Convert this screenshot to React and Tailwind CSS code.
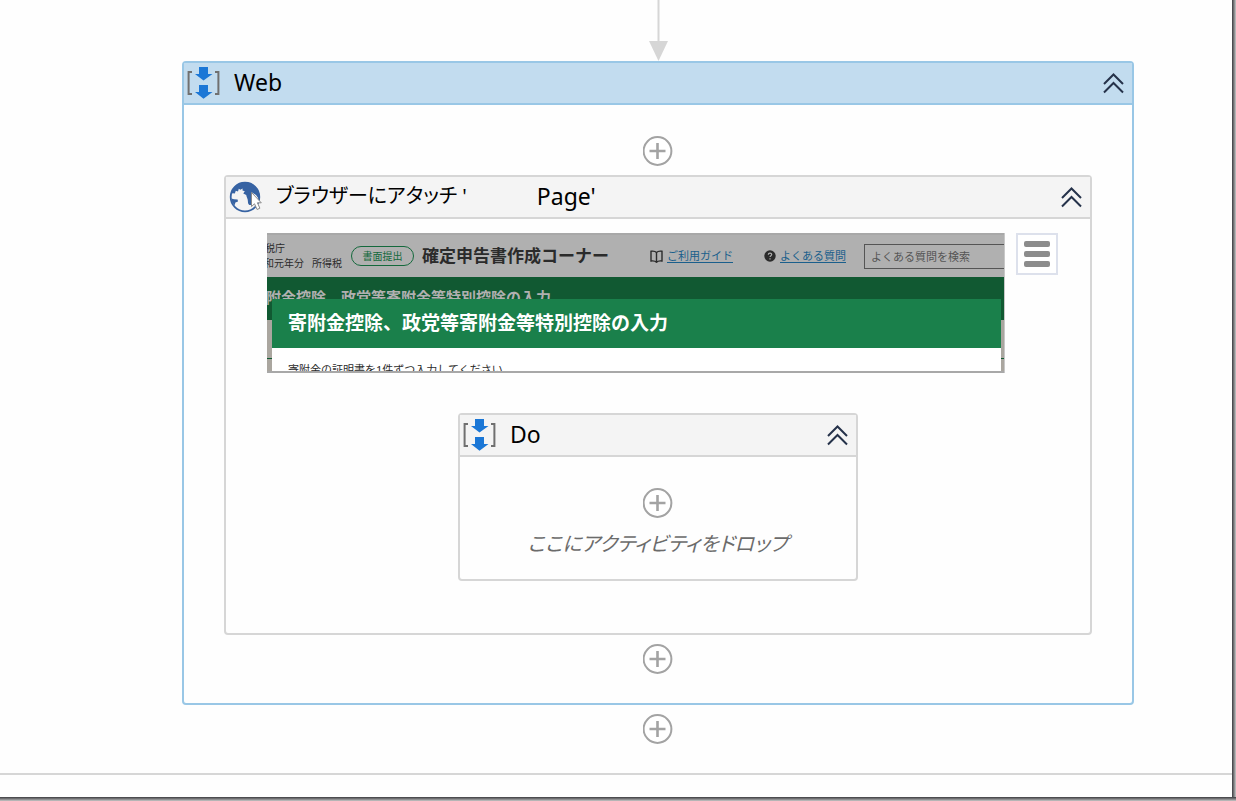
import React from "react";

function SequenceIcon() {
  return (
    <svg width="34" height="34" viewBox="0 0 34 34" className="shrink-0" aria-hidden="true">
      <path d="M5 6.1H1.6V28H5M28 6.1H31.4V28H28" fill="none" stroke="#707070" strokeWidth="2" />
      <path d="M12 1h9v7h4.500l-9 6.500L8 8h4zM12 19h9v7h4.500l-9 6.800L8 26h4z" fill="#1b77d6" />
    </svg>
  );
}

function GlobeIcon() {
  return (
    <svg width="34" height="34" viewBox="0 0 34 34" className="shrink-0" aria-hidden="true">
      <circle cx="16" cy="17" r="14.300" fill="#f4f4f4" stroke="#3763a3" strokeWidth="1.800" />
      <path
        d="M2 14C3.500 7 9 2.200 16 2.200C23 2.200 28.500 7 30.300 13.500L30.500 20L27 15L23 12.500L22.600 15L22.800 24.500C21 26 18.800 24.500 18.900 21.500C19 18.500 17.500 17.500 17.200 15L14.300 13.600L15.800 11.200L13.500 10.600L13.600 8.400L11.400 9.800L9.800 8.800L9 11.600L6.800 10.800L5.800 13.600L3.800 13.200z"
        fill="#3763a3"
      />
      <path d="M2.300 18.500L5 19.200L8.600 19.400L9 21.400L6.400 22.400L5.600 25.200L3.300 22.500z" fill="#3763a3" />
      <path d="M22.500 12.500V26.500l3-2.700 2.600 5.700 2.800-1.300-2.500-5.400h3.900z" fill="#fff" stroke="#8a8a8a" strokeWidth="1" />
    </svg>
  );
}

function CollapseButton({ label }) {
  return (
    <button type="button" aria-label={label} className="ml-auto shrink-0">
      <svg width="22" height="22" viewBox="0 0 22 22" aria-hidden="true">
        <path d="M2 12L11.500 2.500L21 12M2 20.500L11.500 11L21 20.500" fill="none" stroke="#25324a" strokeWidth="2" />
      </svg>
    </button>
  );
}

function AddButton() {
  return (
    <button type="button" aria-label="アクティビティを追加" className="block size-[30px] shrink-0">
      <svg width="30" height="30" viewBox="0 0 30 30" aria-hidden="true">
        <circle cx="14.500" cy="15" r="13.900" fill="#fff" stroke="#a3a3a3" strokeWidth="2" />
        <path d="M14.500 7v16M6.500 15h16" stroke="#a3a3a3" strokeWidth="2.600" />
      </svg>
    </button>
  );
}

function BookIcon() {
  return (
    <svg width="13" height="13" viewBox="0 0 13 13" className="shrink-0" aria-hidden="true">
      <path
        d="M6.500 2.500C5.300 1.200 3 1 1 1.300V11c2-.3 4.300 0 5.500 1.200C7.700 11 10 10.700 12 11V1.300C10 1 7.700 1.200 6.500 2.500zM6.500 2.500V12"
        fill="none"
        stroke="#2b2b2b"
        strokeWidth="1.400"
      />
    </svg>
  );
}

function HelpIcon() {
  return (
    <svg width="12" height="12" viewBox="0 0 12 12" className="shrink-0" aria-hidden="true">
      <circle cx="6" cy="6" r="5.700" fill="#2b2b2b" />
      <path d="M4.300 4.700C4.300 2.600 7.700 2.600 7.700 4.600C7.700 5.700 6 5.700 6 7.100M6 8.200v1.200" fill="none" stroke="#b0b0b0" strokeWidth="1.200" />
    </svg>
  );
}

function PagePreview() {
  return (
    <div className="relative h-[140px] min-w-0 flex-1 overflow-hidden border-r border-[#c8c8c8] bg-[#aaa69f]">
      <div className="flex h-11 items-center overflow-hidden border-t-2 border-[#a8a8a8] bg-[#b0b0b0] whitespace-nowrap text-[#2b2b2b]">
        <div className="flex w-[75px] shrink-0 flex-col text-[10px] leading-[15px]">
          <span className="-ml-[12px]">国税庁</span>
          <span className="flex justify-end gap-2">
            <span>令和元年分</span>
            <span>所得税</span>
          </span>
        </div>
        <span className="ml-[9px] flex h-5 w-[63px] shrink-0 items-center justify-center rounded-full border border-[#14693c] text-[10px] text-[#14693c]">
          書面提出
        </span>
        <span className="ml-2 shrink-0 text-[17px] font-bold">確定申告書作成コーナー</span>
        <a href="#guide" className="ml-[41px] flex shrink-0 items-center gap-1">
          <BookIcon />
          <span className="border-b border-[#1a5f8c] text-[11px] leading-[13px] text-[#1a5f8c]">ご利用ガイド</span>
        </a>
        <a href="#faq" className="ml-[31px] flex shrink-0 items-center gap-1">
          <HelpIcon />
          <span className="border-b border-[#1a5f8c] text-[11px] leading-[13px] text-[#1a5f8c]">よくある質問</span>
        </a>
        <input
          type="text"
          aria-label="よくある質問を検索"
          placeholder="よくある質問を検索"
          className="ml-[18px] h-[25px] w-[180px] shrink-0 border border-[#555] bg-transparent px-[6px] text-[11px] placeholder:text-[#555]"
        />
      </div>
      <div className="h-[43px] overflow-hidden bg-[#115932] whitespace-nowrap">
        <div className="-ml-4 pt-2 text-[15px] leading-6 font-bold text-[#b0b0b0]">寄附金控除、政党等寄附金等特別控除の入力</div>
      </div>
      <div className="mt-[38px] border-t border-[#115932]" />
      <div className="absolute top-[66px] right-[3px] bottom-[2px] left-[5px] overflow-hidden bg-white">
        <h2 className="flex h-[49px] items-center bg-[#1a804b] px-4 text-[19px] font-bold whitespace-nowrap text-white">
          寄附金控除、政党等寄附金等特別控除の入力
        </h2>
        <p className="px-4 pt-[14px] text-[11px] leading-4 text-[#2b2b2b]">寄附金の証明書を1件ずつ入力してください。</p>
      </div>
      <div className="absolute inset-x-0 bottom-0 h-[2px] bg-[#a8a8a8]" />
    </div>
  );
}

export default function App() {
  return (
    <div className="flex min-h-screen flex-col bg-[#fefefe] font-['Noto_Sans','Noto_Sans_CJK_JP',sans-serif] text-black">
      <div className="flex grow">
        <main className="flex min-w-0 grow flex-col">
          <div className="flex flex-col items-center border-b-2 border-[#d6d6d6] pr-[98px] pb-[29px] pl-[182px]">
            <svg width="20" height="61" viewBox="0 0 20 61" aria-hidden="true">
              <path d="M10.500 0V42" stroke="#d6d6d6" strokeWidth="2" />
              <path d="M1 41h19L10.500 61z" fill="#d6d6d6" />
            </svg>

            <section className="flex w-full flex-col rounded border-2 border-[#99c7e6]">
              <header className="flex h-[42px] items-center border-b-2 border-[#99c7e6] bg-[#c2dcef] pr-2 pl-[3px]">
                <SequenceIcon />
                <h1 className="ml-[13px] pb-[3px] text-[23px] leading-8">Web</h1>
                <CollapseButton label="Web を折りたたむ" />
              </header>

              <div className="flex flex-col items-center px-10 pt-[31px] pb-[29px]">
                <AddButton />
                <section className="mt-[9px] mb-[9px] flex w-full flex-col rounded border-2 border-[#d6d6d6]">
                  <header className="flex h-[42px] items-center border-b-2 border-[#d6d6d6] bg-[#f4f4f4] pr-2 pl-[3px]">
                    <GlobeIcon />
                    <h2 className="ml-[13px] flex items-center gap-[70px] pb-[3px] leading-8 whitespace-nowrap">
                      <span className="text-[20px] [font-feature-settings:'palt']">ブラウザーにアタッチ '</span>
                      <span className="text-[23px]">Page'</span>
                    </h2>
                    <CollapseButton label="ブラウザーにアタッチを折りたたむ" />
                  </header>

                  <div className="flex flex-col items-center pt-[14px] pb-[52px]">
                    <div className="flex w-full items-start gap-[11px] pr-8 pl-[41px]">
                      <PagePreview />
                      <button
                        type="button"
                        aria-label="オプション"
                        className="flex size-[42px] shrink-0 flex-col items-center justify-center gap-1 border-2 border-[#dde1ec] bg-white"
                      >
                        <span className="h-[6px] w-[26px] rounded-[2px] bg-[#8c8c8c]" />
                        <span className="h-[6px] w-[26px] rounded-[2px] bg-[#8c8c8c]" />
                        <span className="h-[6px] w-[26px] rounded-[2px] bg-[#8c8c8c]" />
                      </button>
                    </div>

                    <section className="mt-10 flex w-[400px] flex-col rounded border-2 border-[#d6d6d6]">
                      <header className="flex h-[42px] items-center border-b-2 border-[#d6d6d6] bg-[#f4f4f4] pr-2 pl-[3px]">
                        <SequenceIcon />
                        <h3 className="ml-[13px] pb-[3px] text-[23px] leading-8">Do</h3>
                        <CollapseButton label="Do を折りたたむ" />
                      </header>
                      <div className="flex flex-col items-center pt-[31px] pb-[19px]">
                        <AddButton />
                        <p className="mt-[10px] text-[20px] leading-8 whitespace-nowrap text-[#6b6b6b] italic [font-feature-settings:'palt']">
                          ここにアクティビティをドロップ
                        </p>
                      </div>
                    </section>
                  </div>
                </section>
                <AddButton />
              </div>
            </section>

            <div className="mt-[9px]">
              <AddButton />
            </div>
          </div>
        </main>
        <div className="w-1 shrink-0 bg-linear-to-r from-[#3c3c40] to-[#c8c8c8]" />
      </div>
      <div className="h-1 shrink-0 bg-linear-to-b from-[#3c3c40] to-[#c8c8c8]" />
    </div>
  );
}
